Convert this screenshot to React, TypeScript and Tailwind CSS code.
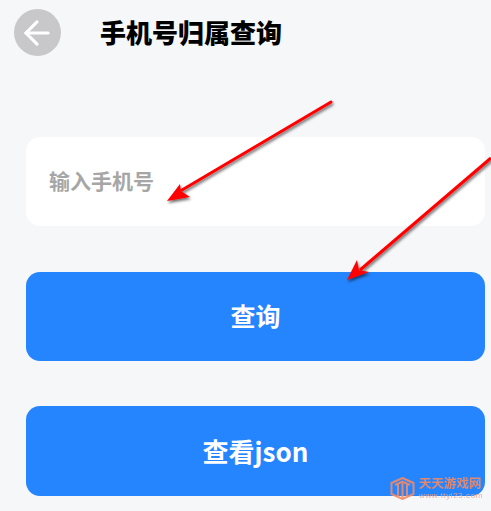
import { ArrowLeft } from 'lucide-react';

const cjk = "font-['Noto_Sans_CJK_SC',sans-serif]";

// 截图上的红色箭头标注
function RedArrows() {
  return (
    <svg className="absolute inset-0 pointer-events-none" width="491" height="511" viewBox="0 0 491 511">
      <defs>
        <filter id="arrowShadow" x="-20%" y="-20%" width="140%" height="140%">
          <feDropShadow dx="1" dy="2" stdDeviation="1.5" floodColor="#000" floodOpacity="0.6" />
        </filter>
      </defs>
      <g filter="url(#arrowShadow)">
        <path d="M331 102 L182 190" stroke="#f00" strokeWidth="3" strokeLinecap="round" />
        <path d="M167 201 L180 184 L181 191 L190 197 Z" fill="#f00" />
        <path d="M491 158 L360 270" stroke="#f00" strokeWidth="3" />
        <path d="M347 280 L357 260 L359 270 L369 272 Z" fill="#f00" />
      </g>
    </svg>
  );
}

// 右下角水印
function Watermark() {
  return (
    <div className="absolute left-[390px] top-[477px] flex items-center gap-[4px] opacity-90">
      <svg width="25" height="23" viewBox="0 0 25 23" fill="none" stroke="#f58a63" strokeWidth="2">
        <path d="M12.5 1 L23.5 6 V17 L12.5 22 L1.5 17 V6 Z" />
        <path d="M8 7 V19 M12.5 5 V21 M17 7 V19 M5 8 L12.5 4.5 L20 8" />
      </svg>
      <div className="flex flex-col gap-[2px]">
        <span className="font-['Liberation_Sans','Noto_Sans_CJK_SC',sans-serif] text-[12.5px] leading-[12px] font-bold text-[#f58a63]">天天游戏网</span>
        <span className="font-['Liberation_Sans',sans-serif] text-[8px] leading-[8px] tracking-[0.6px] text-[#f3a58c]">www.ttyl23.com</span>
      </div>
    </div>
  );
}

export default function App() {
  return (
    <main className={`relative h-[511px] w-full overflow-hidden bg-[#f6f7f9] ${cjk}`}>
      <header className="flex items-start pl-[14px] pt-[9px]">
        <button className="flex h-[47px] w-[47px] items-center justify-center rounded-full bg-[#c8c8ca] pr-[1px] text-white">
          <ArrowLeft size={38} strokeWidth={2} />
        </button>
        <h1 className="ml-[39px] text-[26px] leading-[46px] font-black text-black">手机号归属查询</h1>
      </header>

      <div className="mt-[81px] flex flex-col pl-[26px] pr-[6px]">
        <div className="flex h-[89px] items-center rounded-[14px] bg-white pb-[2px] pl-[23px] text-[21px] font-bold text-[#a6a6a6]">
          输入手机号
        </div>
        <button className="mt-[46px] h-[89px] rounded-[14px] bg-[#2585fe] pb-[2px] text-[25px] font-bold text-white">查询</button>
        <button className="mt-[45px] h-[90px] rounded-[14px] bg-[#2585fe] pb-[2px] text-[26px] font-bold text-white">查看json</button>
      </div>

      <RedArrows />
      <Watermark />
    </main>
  );
}
